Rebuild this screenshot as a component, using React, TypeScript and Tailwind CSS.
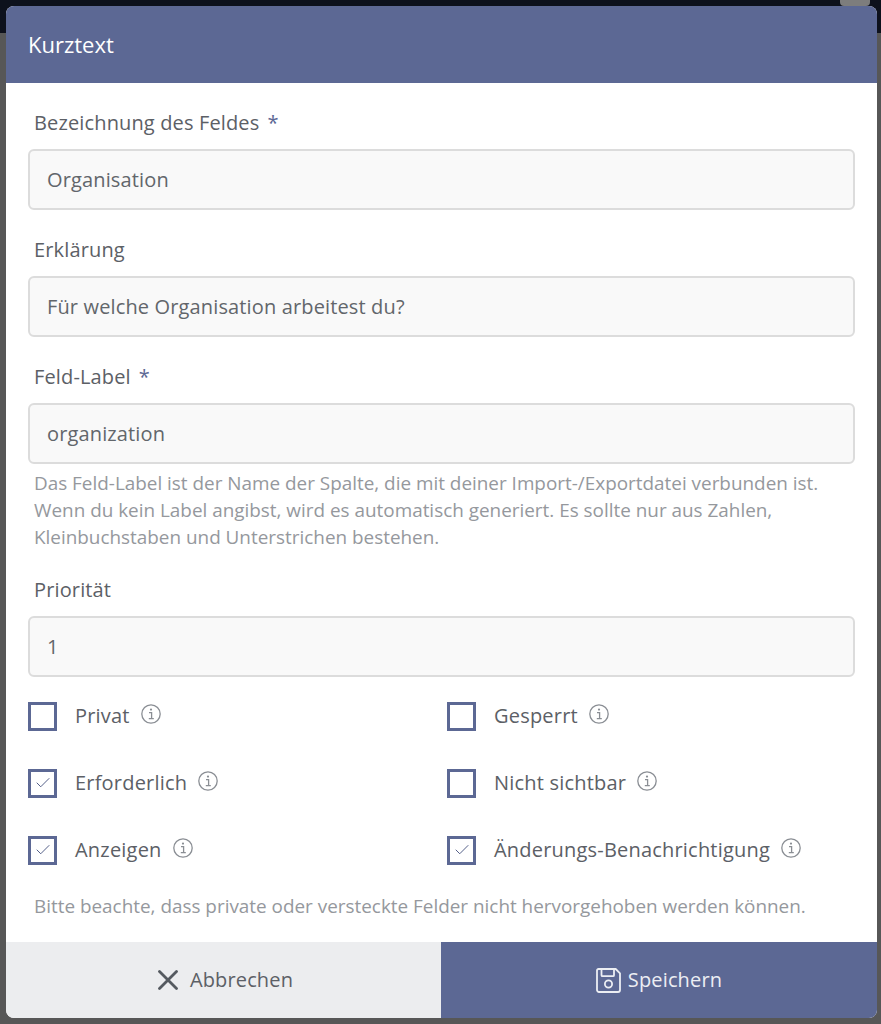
import { Check } from 'lucide-react'

function InfoIcon() {
  return (
    <svg viewBox="0 0 20 20" fill="none" className="mb-[4px] ml-[11px] h-[20px] w-[20px] shrink-0 text-[#8a8e94]">
      <circle cx="10" cy="10" r="9.2" stroke="currentColor" strokeWidth="1.3" />
      <circle cx="10" cy="5.6" r="1.1" fill="currentColor" />
      <path d="M8 8.6h2.6v6M7.8 14.7h5" stroke="currentColor" strokeWidth="1.3" />
    </svg>
  )
}

function CloseIcon() {
  return (
    <svg viewBox="0 0 20 20" fill="none" className="mr-[12px] h-[20px] w-[20px] shrink-0">
      <path d="M1.5 1.5l17 17M18.5 1.5l-17 17" stroke="#555a60" strokeWidth="2.8" strokeLinecap="round" />
    </svg>
  )
}

function SaveIcon() {
  return (
    <svg viewBox="0 0 25 25" fill="none" stroke="#eceef3" strokeWidth="1.8" className="mr-[7px] h-[25px] w-[25px] shrink-0">
      <path d="M2.5 1h17.2L24 5.3v16.7a2 2 0 0 1-2 2H3a2 2 0 0 1-2-2V2.5A1.5 1.5 0 0 1 2.5 1z" strokeLinejoin="round" />
      <path d="M5.5 1v6.2a1 1 0 0 0 1 1h10.5a1 1 0 0 0 1-1V1" />
      <circle cx="12.5" cy="16" r="3.6" />
    </svg>
  )
}

function Label({ children, required }: { children: string; required?: boolean }) {
  return (
    <div className="pl-[6px] text-[20px] leading-[28px] tracking-[0.14px] text-[#5c6066]">
      {children}
      {required && <span className="ml-[8px] text-[#5c6894]">*</span>}
    </div>
  )
}

function Field({ value }: { value: string }) {
  return (
    <div className="flex h-[61px] items-center rounded-[6px] border-2 border-[#dcdcdc] bg-[#f9f9f9] pl-[17px] text-[20px] tracking-[0.14px] text-[#62666b]">
      {value}
    </div>
  )
}

function CheckItem({ label, checked }: { label: string; checked?: boolean }) {
  return (
    <div className="flex h-[30px] items-center">
      <div className="flex h-[29px] w-[29px] items-center justify-center border-[3px] border-[#5c6894] bg-white">
        {checked && <Check size={18} strokeWidth={1.3} className="text-[#4f5a85]" />}
      </div>
      <span className="ml-[18px] text-[20px] leading-[30px] tracking-[0.2px] text-[#5c6066]">{label}</span>
      <InfoIcon />
    </div>
  )
}

export default function App() {
  return (
    <div className="relative h-[1024px] w-[881px] overflow-hidden bg-[#575757] pt-[6px] pl-[6px] font-['Open_Sans',sans-serif]">
      {/* page behind the dialog */}
      <div className="absolute top-0 left-0 h-[33px] w-full bg-[#0d111c]" />
      <div className="absolute top-0 left-[840px] h-[6px] w-[30px] rounded-b-[4px] bg-[#7d7d7d]" />
      <div className="relative flex h-[1012px] w-[871px] flex-col overflow-hidden rounded-[8px] bg-white">
        <div className="flex h-[77px] items-center bg-[#5c6894] pl-[22px] text-[22px] text-white">Kurztext</div>

        <div className="flex-1 px-[22px] pt-[26px]">
          <Label required>Bezeichnung des Feldes</Label>
          <div className="mt-[12px]"><Field value="Organisation" /></div>

          <div className="mt-[26px]"><Label>Erklärung</Label></div>
          <div className="mt-[12px]"><Field value="Für welche Organisation arbeitest du?" /></div>

          <div className="mt-[26px]"><Label required>Feld-Label</Label></div>
          <div className="mt-[12px]"><Field value="organization" /></div>

          <p className="mt-[6px] pl-[6px] text-[18.9px] leading-[27px] text-[#95989d]">
            Das Feld-Label ist der Name der Spalte, die mit deiner Import-/Exportdatei verbunden ist.
            <br />
            Wenn du kein Label angibst, wird es automatisch generiert. Es sollte nur aus Zahlen,
            <br />
            Kleinbuchstaben und Unterstrichen bestehen.
          </p>

          <div className="mt-[25px]"><Label>Priorität</Label></div>
          <div className="mt-[12px]"><Field value="1" /></div>

          <div className="mt-[24px] grid grid-cols-[419px_1fr] gap-y-[37px]">
            <CheckItem label="Privat" />
            <CheckItem label="Gesperrt" />
            <CheckItem label="Erforderlich" checked />
            <CheckItem label="Nicht sichtbar" />
            <CheckItem label="Anzeigen" checked />
            <CheckItem label="Änderungs-Benachrichtigung" checked />
          </div>

          <p className="mt-[28px] pl-[6px] text-[18.9px] leading-[27px] text-[#95989d]">
            Bitte beachte, dass private oder versteckte Felder nicht hervorgehoben werden können.
          </p>
        </div>

        <div className="flex h-[76px]">
          <div className="flex w-[435px] items-center justify-center bg-[#ecedef] pl-[4px] text-[20px] tracking-[0.14px] text-[#5c6066]">
            <CloseIcon />
            Abbrechen
          </div>
          <div className="flex flex-1 items-center justify-center bg-[#5c6894] text-[20px] tracking-[0.14px] text-[#eceef3]">
            <SaveIcon />
            Speichern
          </div>
        </div>
      </div>
    </div>
  )
}
